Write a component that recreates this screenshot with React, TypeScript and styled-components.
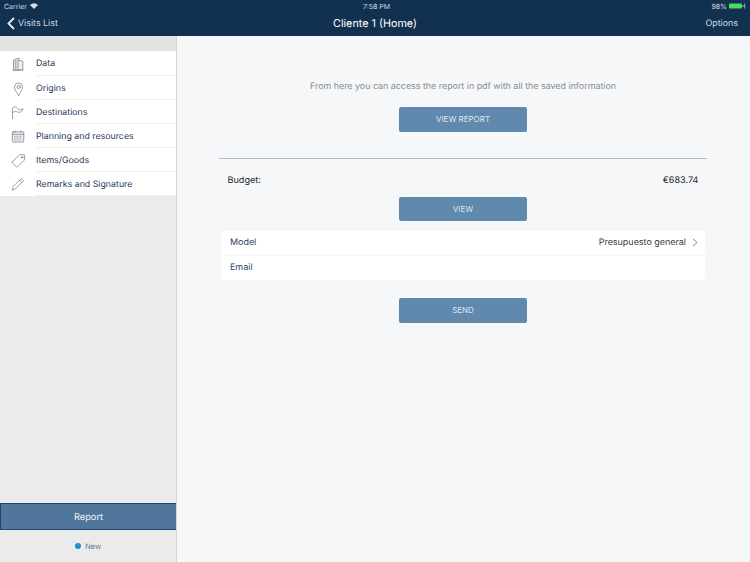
import React from "react";
import styled, { createGlobalStyle } from "styled-components";

const Global = createGlobalStyle`
  html, body { margin: 0; padding: 0; }
  body { font-family: Inter, "Liberation Sans", sans-serif; -webkit-font-smoothing: antialiased; text-rendering: geometricPrecision; }
`;

const Page = styled.div`
  width: 750px;
  height: 562px;
  display: flex;
  flex-direction: column;
  overflow: hidden;
  background: #f5f7f9;
`;
const Header = styled.header`
  height: 36px;
  flex: none;
  background: #12304f;
  color: #fff;
  display: flex;
  flex-direction: column;
`;
const StatusBar = styled.div`
  height: 12px;
  display: grid;
  grid-template-columns: 1fr auto 1fr;
  align-items: center;
  padding: 0 4px;
  font-size: 7px;
  color: #d3dae2;
`;
const StatusLeft = styled.div`
  display: flex;
  align-items: center;
  gap: 3px;
`;
const StatusTime = styled.div`
  margin-left: 3px;
`;
const StatusRight = styled.div`
  display: flex;
  align-items: center;
  justify-content: flex-end;
  gap: 2px;
`;
const NavBar = styled.div`
  flex: 1;
  display: grid;
  grid-template-columns: 1fr auto 1fr;
  align-items: center;
  padding: 0 12px 2px 12px;
`;
const BackLink = styled.div`
  display: flex;
  align-items: center;
  gap: 3px;
  margin-left: -5px;
  font-size: 8.9px;
  color: #d6dde5;
`;
const Title = styled.div`
  font-size: 10.8px;
  color: #fff;
`;
const Options = styled.div`
  text-align: right;
  font-size: 8.9px;
  color: #d6dde5;
`;
const Body = styled.div`
  flex: 1;
  display: flex;
  min-height: 0;
`;
const Sidebar = styled.aside`
  width: 176px;
  flex: none;
  background: #ebebeb;
  border-right: 1px solid #d5d5d5;
  display: flex;
  flex-direction: column;
`;
const SideBand = styled.div`
  height: 15.4px;
  background: #e3e3e3;
`;
const Menu = styled.nav`
  background: #fff;
`;
const MenuRow = styled.div`
  height: 24.17px;
  box-sizing: border-box;
  display: flex;
  align-items: center;
`;
const MenuIcon = styled.div`
  width: 36px;
  flex: none;
  display: flex;
  justify-content: center;
  color: #6f7a86;
`;
const MenuLabel = styled.div`
  flex: 1;
  height: 100%;
  padding-top: 2px;
  display: flex;
  align-items: center;
  font-size: 8.8px;
  color: #1f3a5a;
  border-bottom: 1px solid #eeeeee;
  box-sizing: border-box;
`;
const SideSpacer = styled.div`
  flex: 1;
`;
const ReportTab = styled.div`
  height: 27px;
  box-sizing: border-box;
  padding-top: 1px;
  background: #50769b;
  border: 1px solid #1f466e;
  border-width: 1px 0 1px 1px;
  color: #f1f4f7;
  font-size: 9.3px;
  display: flex;
  align-items: center;
  justify-content: center;
`;
const SideStatus = styled.div`
  height: 32px;
  display: flex;
  align-items: center;
  justify-content: center;
  gap: 4px;
  font-size: 7.6px;
  color: #6d7b8a;
`;
const Dot = styled.span`
  width: 6px;
  height: 6px;
  border-radius: 50%;
  background: #1b8fdc;
`;
const Main = styled.main`
  flex: 1;
  display: flex;
  flex-direction: column;
  align-items: center;
  padding: 43px 43px 0 42px;
`;
const Notice = styled.p`
  margin: 0;
  height: 14px;
  padding-top: 1px;
  box-sizing: border-box;
  line-height: 13px;
  font-size: 8.9px;
  color: #858b92;
`;
const ActionButton = styled.button<{ $top: number }>`
  width: 128px;
  height: 24.5px;
  flex: none;
  margin-top: ${(p) => p.$top}px;
  padding: 0;
  border: none;
  border-radius: 2px;
  background: #5f89ad;
  color: #dfe7ee;
  font: inherit;
  font-size: 8px;
`;
const Divider = styled.hr`
  width: 488px;
  height: 1px;
  border: none;
  margin: 26.5px 0 0;
  background: #a9b8cf;
`;
const BudgetRow = styled.div`
  width: 471px;
  display: flex;
  justify-content: space-between;
  margin-top: 15px;
  height: 14px;
  line-height: 14px;
  font-size: 9.1px;
  color: #26292d;
`;
const Table = styled.div`
  width: 484px;
  margin-top: 9.5px;
  background: #fff;
  border-radius: 2px;
`;
const TableRow = styled.div`
  height: 24.6px;
  box-sizing: border-box;
  padding: 0 7px 0 9px;
  display: flex;
  align-items: center;
  justify-content: space-between;
  font-size: 8.95px;
  color: #25436a;
  & + & {
    border-top: 1px solid #f6f7f9;
  }
`;
const RowValue = styled.div`
  display: flex;
  align-items: center;
  gap: 6px;
  color: #33363a;
`;

const iconProps = {
  width: 16,
  height: 16,
  viewBox: "0 0 16 16",
  fill: "none",
  stroke: "currentColor",
  strokeWidth: 0.7,
  strokeLinejoin: "round" as const,
  strokeLinecap: "round" as const,
};

const BuildingIcon = () => (
  <svg {...iconProps}>
    <path d="M3.5 15V5L9 3V15Z" fill="#e2e5e8" />
    <path d="M9 5.5L12.8 6.2V15H9" fill="#eef0f2" />
    <path d="M3 15H13.2M5.5 6V14M7.2 5.5V14" strokeWidth="0.5" />
  </svg>
);
const PinIcon = () => (
  <svg {...iconProps}>
    <path d="M8.5 15.6C7 12.5 4.5 10 4.5 7A4 4 0 0 1 12.5 7C12.5 10 10 12.5 8.5 15.6Z" />
    <circle cx="8.5" cy="7" r="1.6" />
  </svg>
);
const FlagIcon = () => (
  <svg {...iconProps}>
    <path d="M2.5 14.5V4C4.5 2 6.5 3 8 4.8C9.5 6.3 11 6 13 4.5C12.4 7 10.8 8.8 8.8 8.3C6.8 7.8 4.5 6.5 2.5 8.8" />
  </svg>
);
const CalendarIcon = () => (
  <svg {...iconProps}>
    <rect x="2.3" y="3.8" width="11.5" height="10.2" rx="1" fill="#eef0f2" />
    <path d="M2.3 6.3H13.8M5 3V4.5M11 3V4.5" />
    <path d="M4 8.2H12.2M4 10H12.2M4 11.8H12.2" strokeWidth="0.8" strokeDasharray="0.8 0.8" strokeLinecap="butt" />
  </svg>
);
const TagIcon = () => (
  <svg {...iconProps}>
    <path d="M2.5 9.8L8.8 3.2C9.2 2.8 9.5 2.6 10 2.6H13.5C14.2 2.6 14.6 3 14.6 3.7V7.2C14.6 7.7 14.4 8 14 8.4L7.8 14.6C7.3 15.1 6.8 15.1 6.3 14.6L2.5 11C2.1 10.6 2.1 10.2 2.5 9.8Z" />
    <circle cx="12" cy="5.2" r="0.9" />
  </svg>
);
const PenIcon = () => (
  <svg {...iconProps}>
    <path d="M2.3 13.8L3.2 10.5L10.7 3C11.2 2.5 11.8 2.5 12.2 3L12.9 3.7C13.4 4.1 13.4 4.7 12.9 5.2L5.5 12.8Z M9.6 4.1L11.8 6.3" />
  </svg>
);

const items: [React.ComponentType, string][] = [
  [BuildingIcon, "Data"],
  [PinIcon, "Origins"],
  [FlagIcon, "Destinations"],
  [CalendarIcon, "Planning and resources"],
  [TagIcon, "Items/Goods"],
  [PenIcon, "Remarks and Signature"],
];

export default function App() {
  return (
    <Page>
      <Global />
      <Header>
        <StatusBar>
          <StatusLeft>
            Carrier
            <svg width="8" height="6" viewBox="0 0 8 6" fill="#d3dae2">
              <path d="M0 2A5.5 5.5 0 0 1 8 2L4 6Z" />
            </svg>
          </StatusLeft>
          <StatusTime>7:58 PM</StatusTime>
          <StatusRight>
            98%
            <svg width="17" height="6" viewBox="0 0 17 6">
              <rect x="0" y="0.5" width="13" height="5" rx="1" fill="#4cd964" />
              <rect x="13.5" y="2" width="1" height="2" fill="#8fa0b0" />
              <path d="M16 0.5L15 3H16L15.5 5.5" stroke="#d3dae2" strokeWidth="0.7" fill="none" />
            </svg>
          </StatusRight>
        </StatusBar>
        <NavBar>
          <BackLink>
            <svg width="8" height="13" viewBox="0 0 8 13" fill="none" stroke="#e6ebf0" strokeWidth="1.8">
              <path d="M7 1L1.5 6.5L7 12" />
            </svg>
            Visits List
          </BackLink>
          <Title>Cliente 1 (Home)</Title>
          <Options>Options</Options>
        </NavBar>
      </Header>
      <Body>
        <Sidebar>
          <SideBand />
          <Menu>
            {items.map(([Icon, label]) => (
              <MenuRow key={label}>
                <MenuIcon>
                  <Icon />
                </MenuIcon>
                <MenuLabel>{label}</MenuLabel>
              </MenuRow>
            ))}
          </Menu>
          <SideSpacer />
          <ReportTab>Report</ReportTab>
          <SideStatus>
            <Dot />
            New
          </SideStatus>
        </Sidebar>
        <Main>
          <Notice>From here you can access the report in pdf with all the saved information</Notice>
          <ActionButton $top={14}>VIEW REPORT</ActionButton>
          <Divider />
          <BudgetRow>
            <span>Budget:</span>
            <span>€683.74</span>
          </BudgetRow>
          <ActionButton $top={8.5}>VIEW</ActionButton>
          <Table>
            <TableRow>
              <span>Model</span>
              <RowValue>
                Presupuesto general
                <svg width="6" height="9" viewBox="0 0 6 9" fill="none" stroke="#6f7680" strokeWidth="0.9">
                  <path d="M1 0.8L5 4.5L1 8.2" />
                </svg>
              </RowValue>
            </TableRow>
            <TableRow>
              <span>Email</span>
            </TableRow>
          </Table>
          <ActionButton $top={18.5}>SEND</ActionButton>
        </Main>
      </Body>
    </Page>
  );
}
